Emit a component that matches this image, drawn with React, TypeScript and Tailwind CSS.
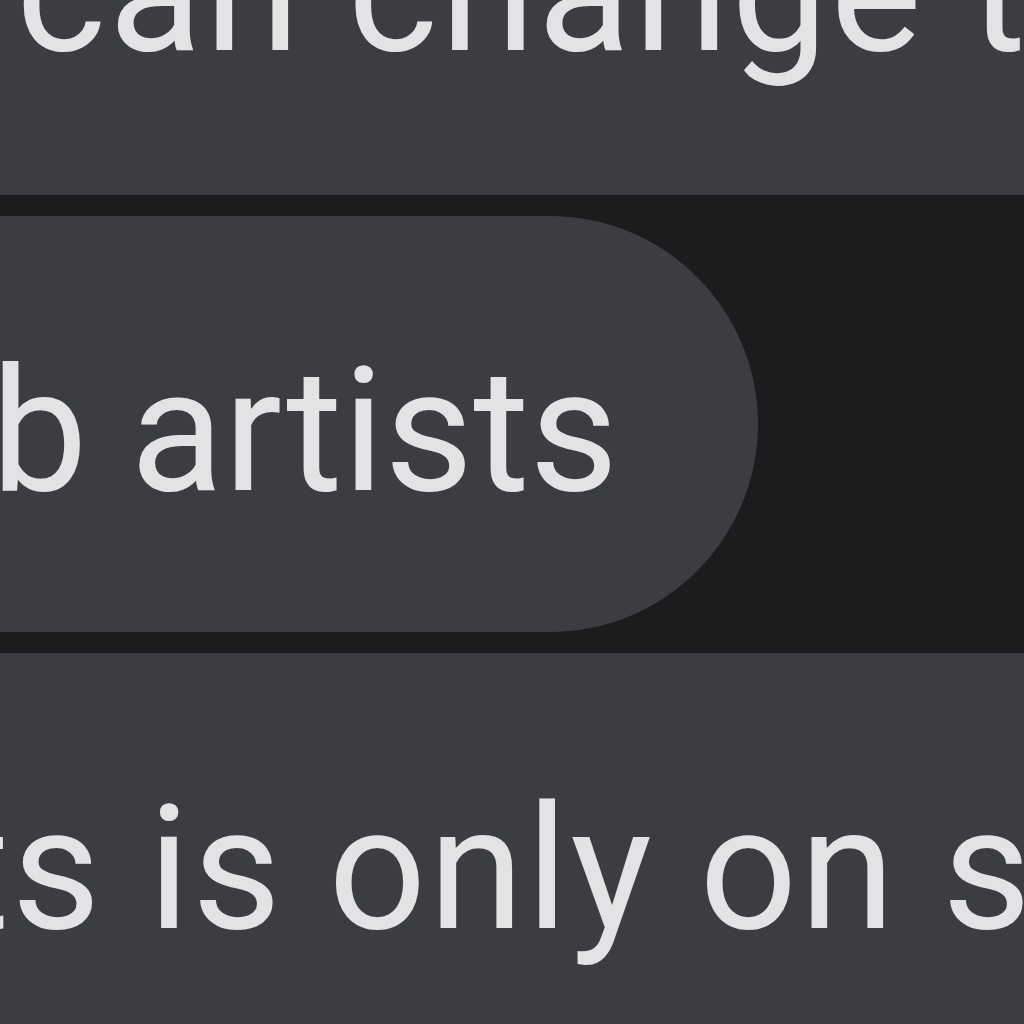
export default function App() {
  return (
    <div
      className="h-[1024px] w-[1024px] overflow-hidden bg-[#3c3d40] text-[#e3e3e6]"
      style={{ fontFamily: "Roboto, 'Noto Sans', sans-serif" }}
    >
      {/* heading line, mostly scrolled off the top */}
      <p className="-mt-[95px] ml-[16px] whitespace-nowrap text-[172px] leading-[172px] tracking-[2.6px]">
        can change the
      </p>

      {/* chip row */}
      <div className="mt-[118px] flex h-[458px] items-center bg-[#1b1c1e]">
        <div className="-ml-[60px] flex h-[416px] w-[818px] items-center rounded-r-full bg-[#3c3d40] pt-[14px]">
          <span className="ml-[51px] whitespace-nowrap text-[172px] leading-[172px]">
            b artists
          </span>
        </div>
      </div>

      {/* body text */}
      <p className="-ml-[47px] mt-[130px] whitespace-nowrap text-[172px] leading-[172px] tracking-[2.4px]">
        ts is only on sale
      </p>
    </div>
  );
}
